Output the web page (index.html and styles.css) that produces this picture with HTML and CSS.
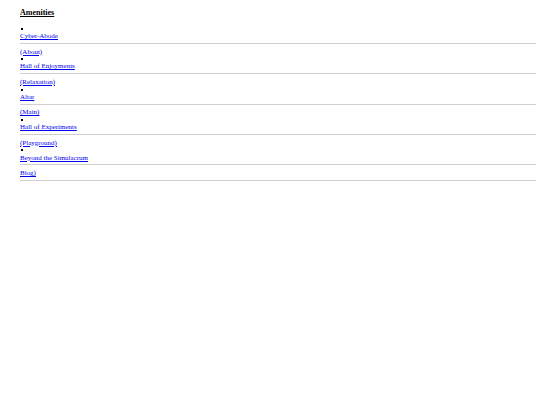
FILE: index.html
```html
<!DOCTYPE html>
<html>
<head>
<meta charset="utf-8">
<link rel="stylesheet" href="styles.css">
</head>
<body>
<nav class="nav">
  <h2 class="title">Amenities</h2>
  <ul class="list">
    <li class="item"><span class="dot"></span><a class="name" href="#">Cyber-Abode</a><a class="sub" href="#">(About)</a></li>
    <li class="item"><span class="dot"></span><a class="name" href="#">Hall of Enjoyments</a><a class="sub" href="#">(Relaxation)</a></li>
    <li class="item"><span class="dot"></span><a class="name" href="#">Altar</a><a class="sub" href="#">(Main)</a></li>
    <li class="item"><span class="dot"></span><a class="name" href="#">Hall of Experiments</a><a class="sub" href="#">(Playground)</a></li>
    <li class="item"><span class="dot"></span><a class="name" href="#">Beyond the Simulacrum</a><a class="sub" href="#">Blog)</a></li>
  </ul>
</nav>
</body>
</html>
```
FILE: styles.css
```css
html, body {
  margin: 0;
  padding: 0;
  background: #ffffff;
}
body {
  font-family: "Liberation Serif", "Times New Roman", serif;
  font-size: 7px;
  color: #000;
}
.nav {
  padding: 8px 4px 0 20px;
}
.title {
  font-size: 8px;
  font-weight: bold;
  text-decoration: underline;
  margin: 0 0 10.8px 0;
  line-height: 9px;
}
.list {
  list-style: none;
  margin: 0;
  padding: 0;
  border-bottom: 1px solid #cfcfcf;
}
.item {
  display: flex;
  flex-direction: column;
  align-items: flex-start;
}
.dot {
  display: block;
  width: 2px;
  height: 2px;
  background: #000;
  margin: 0 0 3.25px 1px;
}
a {
  color: #0000ee;
  text-decoration: underline;
  line-height: 7.5px;
}
.name {
  display: block;
  align-self: stretch;
  padding-bottom: 2.25px;
  border-bottom: 1px solid #cfcfcf;
  margin-bottom: 4.8px;
}
.sub {
  display: block;
  padding-bottom: 2.1px;
}
```
